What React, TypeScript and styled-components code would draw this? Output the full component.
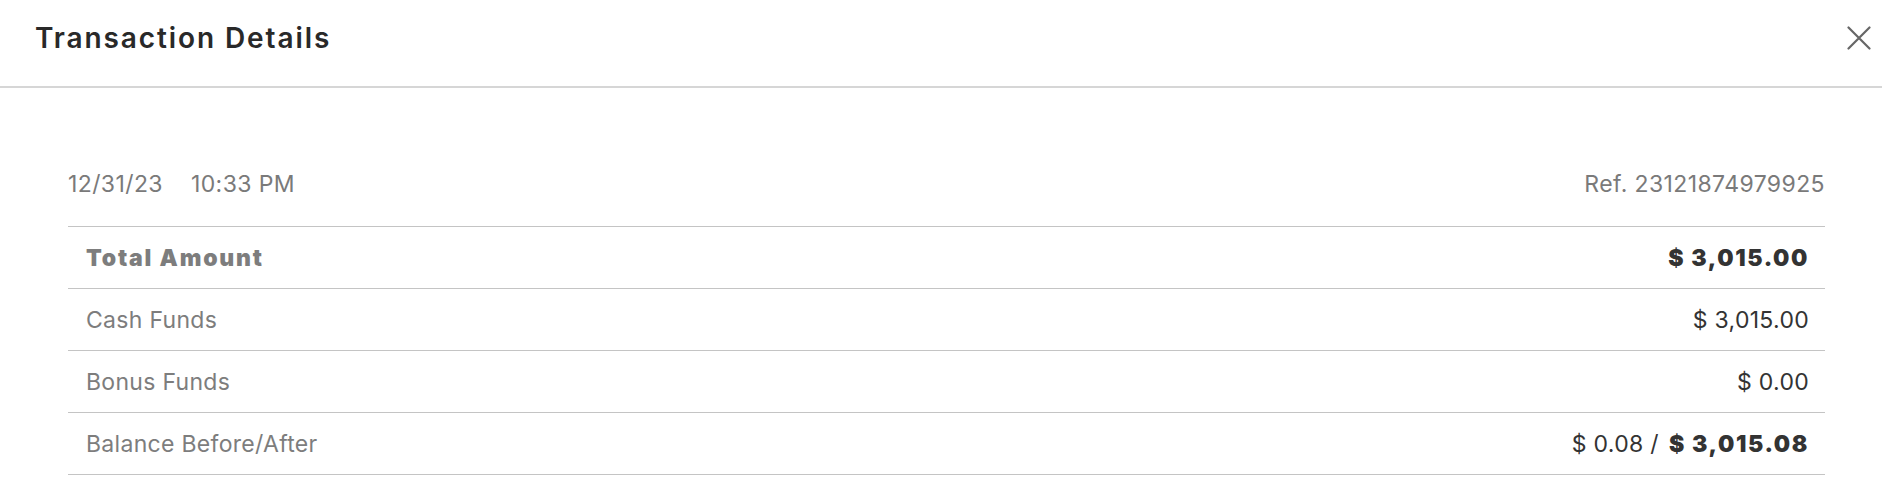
import React from "react";
import styled, { createGlobalStyle } from "styled-components";

const GlobalStyle = createGlobalStyle`
  html, body {
    margin: 0;
    padding: 0;
    background: #ffffff;
  }
  body {
    font-family: Inter, "Noto Sans", Roboto, sans-serif;
    -webkit-font-smoothing: antialiased;
  }
`;

const Modal = styled.div`
  width: 1882px;
  background: #ffffff;
`;

const Header = styled.header`
  display: flex;
  align-items: center;
  justify-content: space-between;
  height: 88px;
  padding: 0 10px 10px 35px;
  border-bottom: 2px solid #d6d6d6;
  box-sizing: border-box;
`;

const Title = styled.h2`
  margin: 0;
  font-size: 28px;
  line-height: 34px;
  font-weight: 600;
  color: #292929;
  letter-spacing: 1.9px;
`;

const CloseButton = styled.button`
  display: flex;
  align-items: center;
  justify-content: center;
  width: 26px;
  height: 26px;
  padding: 0;
  border: none;
  background: transparent;
  color: #666666;
  cursor: pointer;
`;

const Body = styled.section`
  padding: 82px 57px 0 68px;
`;

const MetaRow = styled.div`
  display: flex;
  justify-content: space-between;
  align-items: center;
  line-height: 28px;
  padding-bottom: 28px;
  border-bottom: 1px solid #c4c4c4;
  font-size: 23px;
  letter-spacing: 0.4px;
  color: #7a7a7a;
`;

const DateGroup = styled.div`
  display: flex;
  gap: 28px;
  align-items: center;
`;

const Row = styled.div`
  display: flex;
  justify-content: space-between;
  align-items: center;
  height: 62px;
  padding: 0 16px 0 18px;
  border-bottom: 1px solid #c4c4c4;
  box-sizing: border-box;
  font-size: 23px;
  letter-spacing: 0.3px;
`;

const Label = styled.span<{ $strong?: boolean }>`
  color: #7d7d7d;
  font-weight: ${(p) => (p.$strong ? 900 : 400)};
  letter-spacing: ${(p) => (p.$strong ? "1.8px" : "0.3px")};
`;

const Value = styled.span`
  display: flex;
  align-items: center;
  gap: 10px;
  color: #333333;
  font-weight: 400;
`;

const Strong = styled.span`
  font-weight: 900;
  color: #333333;
  letter-spacing: 1.6px;
`;

const CloseIcon = () => (
  <svg width="24" height="24" viewBox="0 0 24 24" fill="none">
    <path
      d="M1.5 1.5 L22.5 22.5 M22.5 1.5 L1.5 22.5"
      stroke="currentColor"
      strokeWidth="2.2"
      strokeLinecap="round"
    />
  </svg>
);

export default function App() {
  return (
    <>
      <GlobalStyle />
      <Modal>
        <Header>
          <Title>Transaction Details</Title>
          <CloseButton aria-label="Close">
            <CloseIcon />
          </CloseButton>
        </Header>
        <Body>
          <MetaRow>
            <DateGroup>
              <span>12/31/23</span>
              <span>10:33 PM</span>
            </DateGroup>
            <span>Ref. 23121874979925</span>
          </MetaRow>
          <Row>
            <Label $strong>Total Amount</Label>
            <Strong>$ 3,015.00</Strong>
          </Row>
          <Row>
            <Label>Cash Funds</Label>
            <Value>$ 3,015.00</Value>
          </Row>
          <Row>
            <Label>Bonus Funds</Label>
            <Value>$ 0.00</Value>
          </Row>
          <Row>
            <Label>Balance Before/After</Label>
            <Value>
              <span>$ 0.08 /</span>
              <Strong>$ 3,015.08</Strong>
            </Value>
          </Row>
        </Body>
      </Modal>
    </>
  );
}
